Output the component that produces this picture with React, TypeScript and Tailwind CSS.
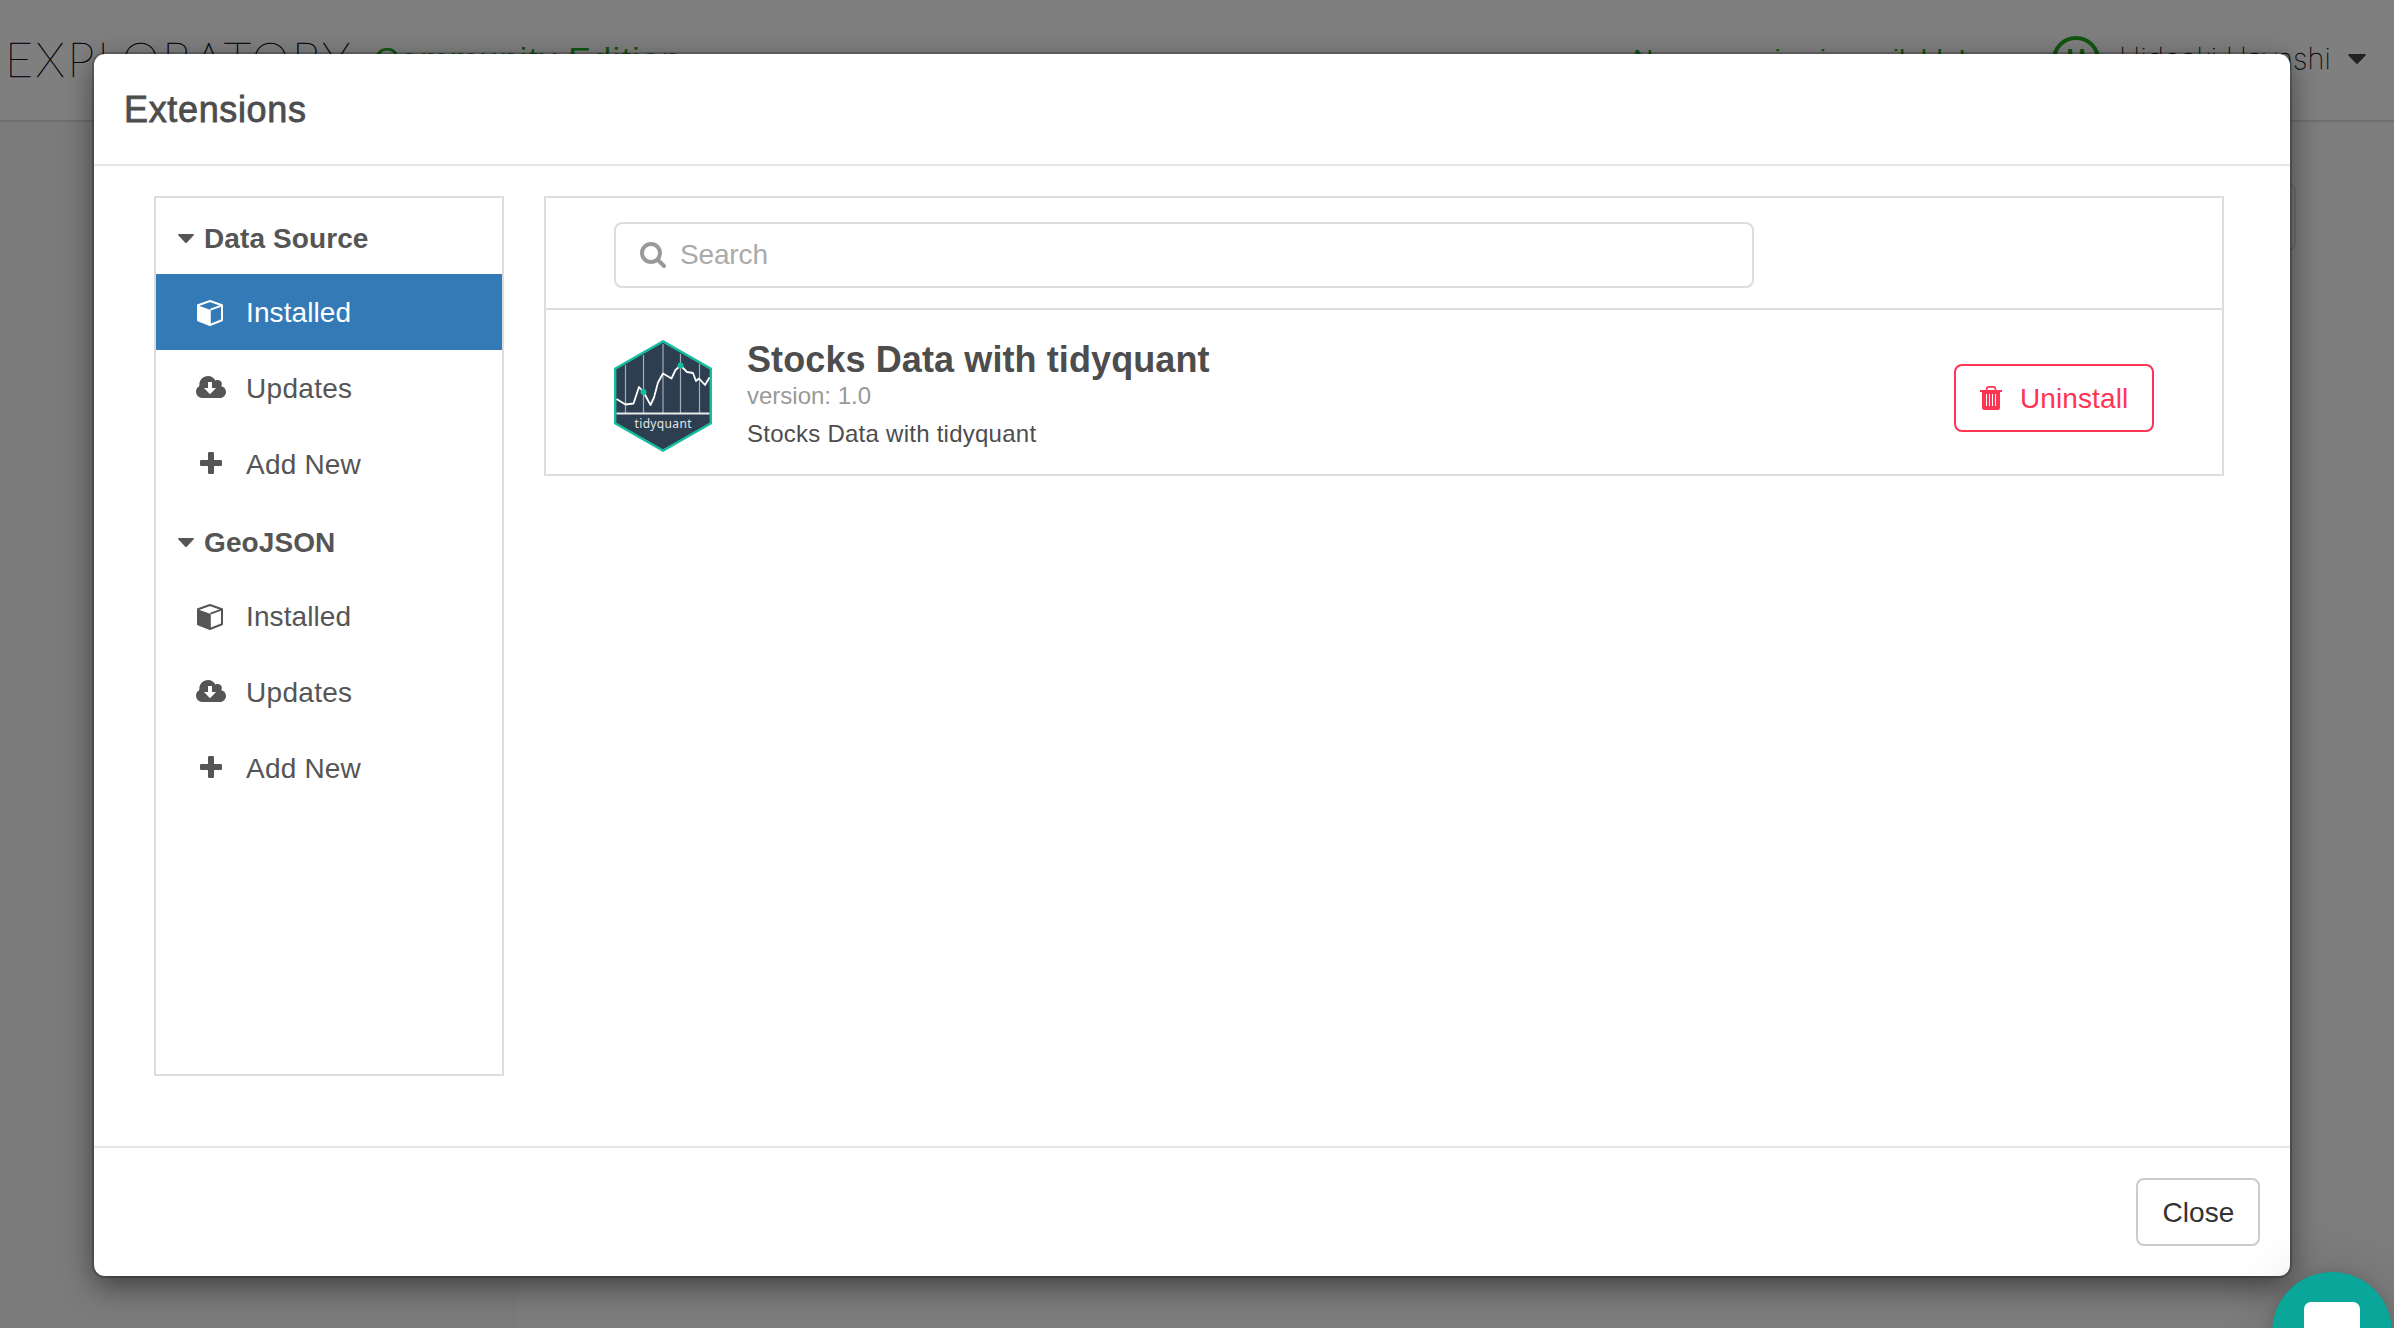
import React from "react";

type IconProps = { className?: string };

const CubeIcon = ({ className }: IconProps) => (
  <svg viewBox="0 0 26 26" className={className} fill="none">
    <path d="M13 1 25 5.2V20.2L13 25 1 20.2V5.2Z" stroke="currentColor" strokeWidth="2" strokeLinejoin="round" />
    <path d="M1 5.4 13.8 10V25.6L1 20.4Z" fill="currentColor" />
    <path d="M13.4 9.6 24.6 5.6" stroke="currentColor" strokeWidth="1.9" />
  </svg>
);

const CloudIcon = ({ className }: IconProps) => (
  <svg viewBox="0 0 30 22" className={className}>
    <path
      fillRule="evenodd"
      fill="currentColor"
      d="M6.2 22A6.2 6.2 0 0 1 0 15.800C0 13 1.500 10.900 3.300 10C3 3.800 7 0 12.200 0C15.200 0 17.800 1.600 19.300 4.500C21.200 3.600 24 4 25.200 5.800C26 7 26.100 8.600 25.300 10.200C28.200 10.900 30 13.200 30 16C30 19.300 27.300 22 24 22ZM12 6V12H8L14 18.300 20 12H16V6Z"
    />
  </svg>
);

const PlusIcon = ({ className }: IconProps) => (
  <svg viewBox="0 0 22 22" className={className} fill="currentColor">
    <rect x="8" y="0" width="6" height="22" rx="1.3" />
    <rect x="0" y="8" width="22" height="6" rx="1.3" />
  </svg>
);

const CaretIcon = ({ className }: IconProps) => (
  <svg viewBox="0 0 16 9" className={className} fill="currentColor">
    <path d="M.9 0H15.100C16 0 16.200.8 15.700 1.300L9 8.400Q8 9.400 7 8.400L.3 1.300C-.2.8 0 0 .9 0Z" />
  </svg>
);

const SearchIcon = ({ className }: IconProps) => (
  <svg viewBox="0 0 26 26" className={className} fill="none" stroke="currentColor">
    <circle cx="11" cy="11" r="9" strokeWidth="4" />
    <path d="m18 18 6 6" strokeWidth="4" strokeLinecap="round" />
  </svg>
);

const TrashIcon = ({ className }: IconProps) => (
  <svg viewBox="0 0 22 24" className={className}>
    <path d="M6.600 5V3.200Q6.600 .9 8.800 .9H13.200Q15.400 .9 15.400 3.200V5" fill="none" stroke="currentColor" strokeWidth="1.7" />
    <rect y="4" width="22" height="2" fill="currentColor" />
    <path
      fillRule="evenodd"
      fill="currentColor"
      d="M2 5H20V21.500Q20 24 17.500 24H4.500Q2 24 2 21.500ZM6 8V20H7V8ZM9 8V20H10V8ZM12 8V20H13V8ZM15 8V20H16V8Z"
    />
  </svg>
);

const TidyquantLogo = () => (
  <svg viewBox="0 0 98 112" className="h-[112px] w-[98px] shrink-0">
    <path d="M49 1.400 96.800 28.600V83.400L49 110.600 1.200 83.400V28.600Z" fill="#2c3e50" stroke="#18bc9c" strokeWidth="2.400" />
    <g stroke="#a4adb5" strokeWidth="1.200">
      <path d="M11.500 25V73M29.500 15V73M49 4V73M66.500 14V73M85.500 24V73" />
    </g>
    <path d="M2.500 73.500H95.500" stroke="#e8eaec" strokeWidth="2.200" />
    <path
      d="M2.500 59 11.500 64.500 19.500 63.500 25 47 29.500 52 36.500 65 40 57.500 44 42.500 49 33.500 57.500 38.500 61.500 30 66.500 25.500 73 32 79 33 82 41 85 38.500 91 45 95.500 37.500"
      fill="none"
      stroke="#fff"
      strokeWidth="1.8"
      strokeLinejoin="round"
    />
    <circle cx="29.500" cy="52" r="3" fill="#18bc9c" />
    <circle cx="66.500" cy="25.500" r="3" fill="#18bc9c" />
    <text x="49" y="87.500" textAnchor="middle" fontSize="12" textLength="57" className="fill-[#e3e6e9] font-['Noto_Sans']">
      tidyquant
    </text>
  </svg>
);

const entries = [
  { label: "Installed", spacing: "tracking-[0.1px]", icon: <CubeIcon className="ml-[1px] mt-[2px] size-[26px]" /> },
  { label: "Updates", spacing: "tracking-[0.3px]", icon: <CloudIcon className="h-[22px] w-[30px] -mt-[2px]" /> },
  { label: "Add New", spacing: "tracking-[0.2px]", icon: <PlusIcon className="ml-1 mt-[-2px] size-[22px]" /> },
];

function Section({ title, active }: { title: string; active?: string }) {
  return (
    <section>
      <h2 className="flex h-[76px] items-center pl-[22px] font-bold tracking-[0.1px]">
        <CaretIcon className="mr-[10px] mt-[5px] h-[9px] w-4" />
        <span className="pt-[5px]">{title}</span>
      </h2>
      <ul>
        {entries.map((e) => (
          <li key={e.label} className={`flex h-[76px] items-center pl-10 ${e.label === active ? "bg-[#337ab7] text-white" : ""}`}>
            <span className="flex w-[50px] items-center">{e.icon}</span>
            <span className={`pt-[1px] ${e.spacing}`}>{e.label}</span>
          </li>
        ))}
      </ul>
    </section>
  );
}

export default function App() {
  return (
    <div className="relative h-[1328px] w-full overflow-hidden bg-[#f7f7f7] font-['Liberation_Sans',sans-serif]">
      {/* Application window behind the dialog */}
      <header className="flex h-[122px] items-start border-b-2 border-[#dedede] bg-white pl-[5px] pt-8 whitespace-nowrap">
        <div className="-mt-[1px] w-[369px] font-['Lato'] text-[48px] leading-[56px] font-thin tracking-[2.9px] text-[#100820] [-webkit-text-stroke:0.5px_#100820]">
          EXPLORATORY
        </div>
        <div className="mt-[7px] text-[34px] leading-10 tracking-[1.3px] text-[#22aa22]">Community Edition</div>
        <div className="ml-auto mt-[12px] mr-[86px] text-[28px] leading-8 text-[#22aa22]">Newer version is available!</div>
        <div className="mt-1 flex size-[48px] shrink-0 items-center justify-center rounded-full border-4 border-[#22aa22] pb-[2px] text-[27px] font-bold text-[#22aa22]">H</div>
        <div className="ml-[19px] mt-[9px] w-[229px] font-['Inter'] text-[29px] leading-9 font-thin tracking-[0.2px] text-[#111] [-webkit-text-stroke:0.3px_#111]">
          Hideaki Hayashi
        </div>
        <CaretIcon className="mr-[28px] mt-[22px] h-[10px] w-[18px] shrink-0 text-[#444]" />
      </header>
      <div className="flex h-[1206px]">
        <div className="w-[518px]" />
        <div className="flex-1 bg-[#fbfbfb] pt-[61px] pr-[98px]">
          <div className="h-[68px] rounded-lg border-2 border-[#dedede]" />
        </div>
      </div>

      <div className="absolute inset-0 bg-black/50" />

      <div
        role="dialog"
        className="absolute left-[94px] top-[54px] flex h-[1222px] w-[2196px] flex-col rounded-[11px] bg-white text-[28px] leading-8 text-[#555] shadow-[0_0_0_2px_rgba(0,0,0,0.2),0_10px_30px_rgba(0,0,0,0.5)]"
      >
        <div className="flex h-[112px] items-center border-b-2 border-[#e5e5e5] pl-7">
          <h1 className="mt-[2px] ml-[2px] text-[36px] leading-10 tracking-[0.65px] text-[#4d4d4d] [-webkit-text-stroke:0.8px_#4d4d4d]">Extensions</h1>
        </div>

        <div className="flex flex-1 items-start gap-10 pl-[60px] pt-[30px] pr-[66px]">
          <nav className="h-[880px] w-[350px] border-2 border-[#ddd]">
            <Section title="Data Source" active="Installed" />
            <Section title="GeoJSON" />
          </nav>

          <main className="h-[280px] flex-1 border-2 border-[#ddd]">
            <div className="h-[112px] border-b-2 border-[#ddd] pl-[68px] pt-6">
              <div className="flex h-[66px] w-[1140px] items-center rounded-lg border-2 border-[#ddd] pl-6 text-[#aaa]">
                <SearchIcon className="size-[26px] text-[#999]" />
                <span className="ml-[14px] tracking-[-0.15px]">Search</span>
              </div>
            </div>
            <div className="flex pl-[68px] pr-[68px] pt-[30px]">
              <TidyquantLogo />
              <div className="ml-[35px] flex-1">
                <h3 className="text-[36px] leading-10 font-bold tracking-[0.1px] text-[#4d4d4d]">Stocks Data with tidyquant</h3>
                <p className="mt-[2px] text-2xl leading-7 text-[#999]">version: 1.0</p>
                <p className="mt-[10px] text-2xl leading-7 tracking-[0.25px] text-[#4d4d4d]">Stocks Data with tidyquant</p>
              </div>
              <button className="mt-6 flex h-[68px] w-[200px] items-center rounded-lg border-2 border-[#ff3352] pl-6 text-[#ff3352]">
                <TrashIcon className="h-6 w-[22px]" />
                <span className="ml-[18px] pt-[1px] tracking-[0.1px]">Uninstall</span>
              </button>
            </div>
          </main>
        </div>

        <footer className="flex h-[130px] justify-end border-t-2 border-[#e5e5e5] pr-[30px] pt-[30px]">
          <button className="h-[68px] w-[124px] rounded-lg border-2 border-[#ccc] pt-[1px] pl-[1px] tracking-[0.1px] text-[#333]">Close</button>
        </footer>
      </div>

      {/* Support chat launcher */}
      <div className="absolute left-[2272px] top-[1272px] size-[120px] rounded-full bg-[#0ba69a] pl-8 pt-[30px] shadow-[0_2px_60px_rgba(0,0,0,0.16),0_2px_12px_rgba(0,0,0,0.15)]">
        <div className="h-[56px] w-[56px] rounded-[7px] bg-white" />
      </div>
    </div>
  );
}
